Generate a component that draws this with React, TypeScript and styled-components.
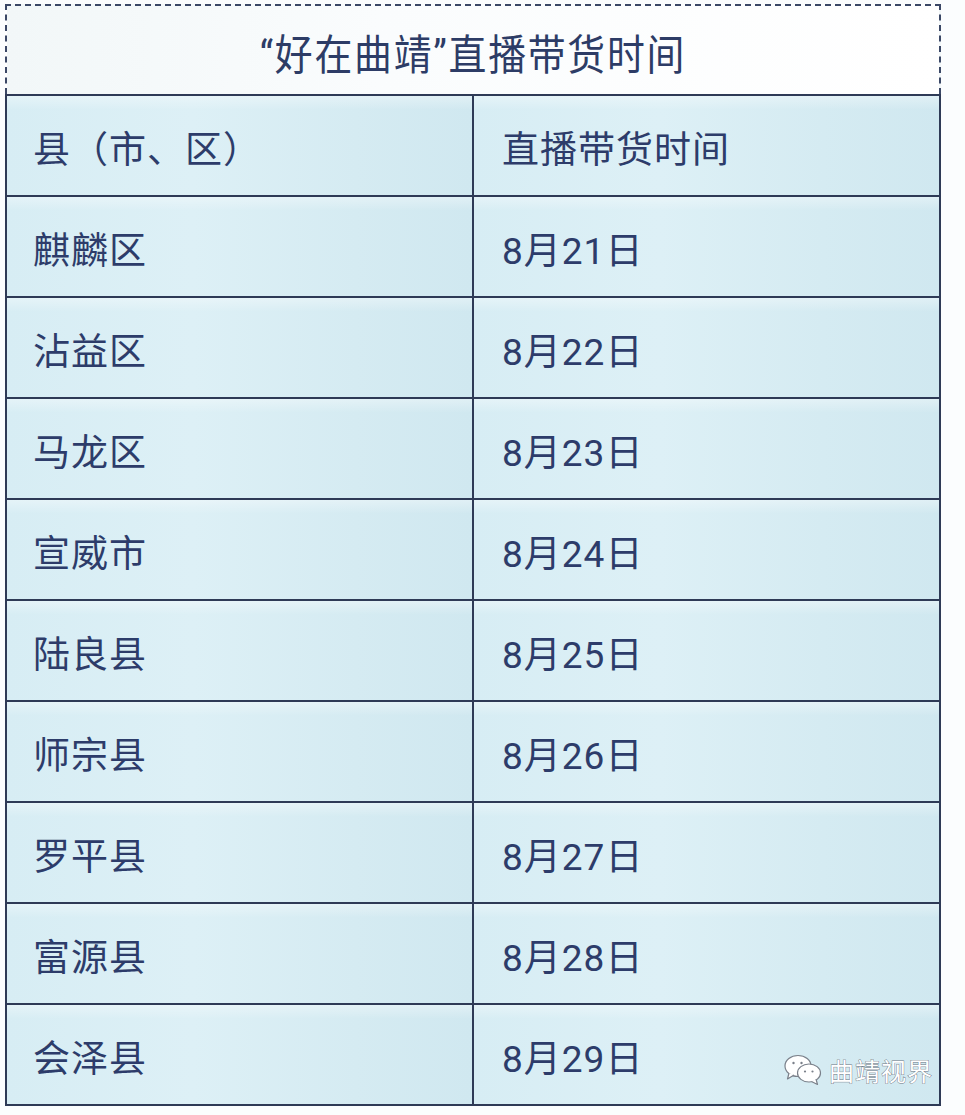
import React from "react";
import styled, { createGlobalStyle } from "styled-components";

const GlobalStyle = createGlobalStyle`
  html, body {
    margin: 0;
    padding: 0;
    background: #fbfdfe;
  }
  body {
    font-family: "Noto Sans CJK SC", "Noto Sans", sans-serif;
  }
`;

const Frame = styled.div`
  width: 936px;
  margin: 4px 0 0 5px;
`;

const TitleBox = styled.div`
  height: 88px;
  border: 2px dashed #3b4866;
  border-bottom: none;
  display: flex;
  align-items: center;
  justify-content: center;
  background: linear-gradient(90deg, #f2f7f8 0%, #fafcfd 40%, #ffffff 100%);
`;

const TitleText = styled.span`
  display: inline-block;
  color: #2d3c66;
  font-family: Roboto, "Noto Sans CJK SC", sans-serif;
  font-size: 42px;
  letter-spacing: 2px;
  transform: scaleX(0.9);
  margin-top: 2px;
`;

const Table = styled.div`
  display: grid;
  grid-template-columns: 467px 467px;
  grid-auto-rows: 101px;
  border-top: 2px solid #2e3a56;
  border-left: 2px solid #2e3a56;
`;

const Cell = styled.div<{ $date?: boolean }>`
  position: relative;
  display: flex;
  align-items: center;
  padding-left: ${(p) => (p.$date ? "28px" : "26px")};
  padding-top: 2px;
  border-right: 2px solid #2e3a56;
  border-bottom: 2px solid #2e3a56;
  background:
    linear-gradient(180deg, rgba(255, 255, 255, 0.35) 0%, rgba(255, 255, 255, 0) 14%),
    linear-gradient(90deg, #d7edf4 0%, #ddf0f6 40%, #d5ebf2 75%, #d0e8f0 100%);
  color: #2d3c6a;
  font-family: ${(p) =>
    p.$date
      ? `Roboto, "Noto Sans CJK SC", sans-serif`
      : `"Noto Sans CJK SC", "Noto Sans", sans-serif`};
  font-size: 37px;
  letter-spacing: 1px;
`;

const Watermark = styled.div`
  position: absolute;
  right: 6px;
  bottom: 16px;
  display: flex;
  align-items: center;
  gap: 6px;
`;

const MarkText = styled.span`
  font-family: "Noto Sans CJK SC", sans-serif;
  font-size: 25px;
  color: #ffffff;
  -webkit-text-stroke: 0.8px #6d7480;
  paint-order: stroke fill;
`;

const WeChatIcon = () => (
  <svg width="40" height="32" viewBox="0 0 40 32">
    <ellipse cx="15" cy="12" rx="13" ry="10.5" fill="#fff" stroke="#7a808a" strokeWidth="1.2" />
    <path d="M6 19 L4.5 25 L11 21" fill="#fff" stroke="#7a808a" strokeWidth="1.2" strokeLinejoin="round" />
    <circle cx="10.5" cy="9" r="1.2" fill="#7a808a" />
    <circle cx="18.5" cy="9" r="1.2" fill="#7a808a" />
    <ellipse cx="26" cy="19" rx="11.5" ry="9" fill="#fff" stroke="#7a808a" strokeWidth="1.2" />
    <path d="M33 25 L34.5 30.5 L28.5 27.5" fill="#fff" stroke="#7a808a" strokeWidth="1.2" strokeLinejoin="round" />
    <circle cx="22" cy="17.5" r="1.1" fill="#7a808a" />
    <circle cx="29.5" cy="17.5" r="1.1" fill="#7a808a" />
  </svg>
);

const rows: [string, string][] = [
  ["麒麟区", "8月21日"],
  ["沾益区", "8月22日"],
  ["马龙区", "8月23日"],
  ["宣威市", "8月24日"],
  ["陆良县", "8月25日"],
  ["师宗县", "8月26日"],
  ["罗平县", "8月27日"],
  ["富源县", "8月28日"],
  ["会泽县", "8月29日"],
];

const App = () => {
  return (
    <>
      <GlobalStyle />
      <Frame>
        <TitleBox>
          <TitleText>“好在曲靖”直播带货时间</TitleText>
        </TitleBox>
        <Table>
          <Cell>县（市、区）</Cell>
          <Cell $date>直播带货时间</Cell>
          {rows.map(([county, date], i) => (
            <React.Fragment key={county}>
              <Cell>{county}</Cell>
              <Cell $date>
                {date}
                {i === rows.length - 1 && (
                  <Watermark>
                    <WeChatIcon />
                    <MarkText>曲靖视界</MarkText>
                  </Watermark>
                )}
              </Cell>
            </React.Fragment>
          ))}
        </Table>
      </Frame>
    </>
  );
};

export default App;
